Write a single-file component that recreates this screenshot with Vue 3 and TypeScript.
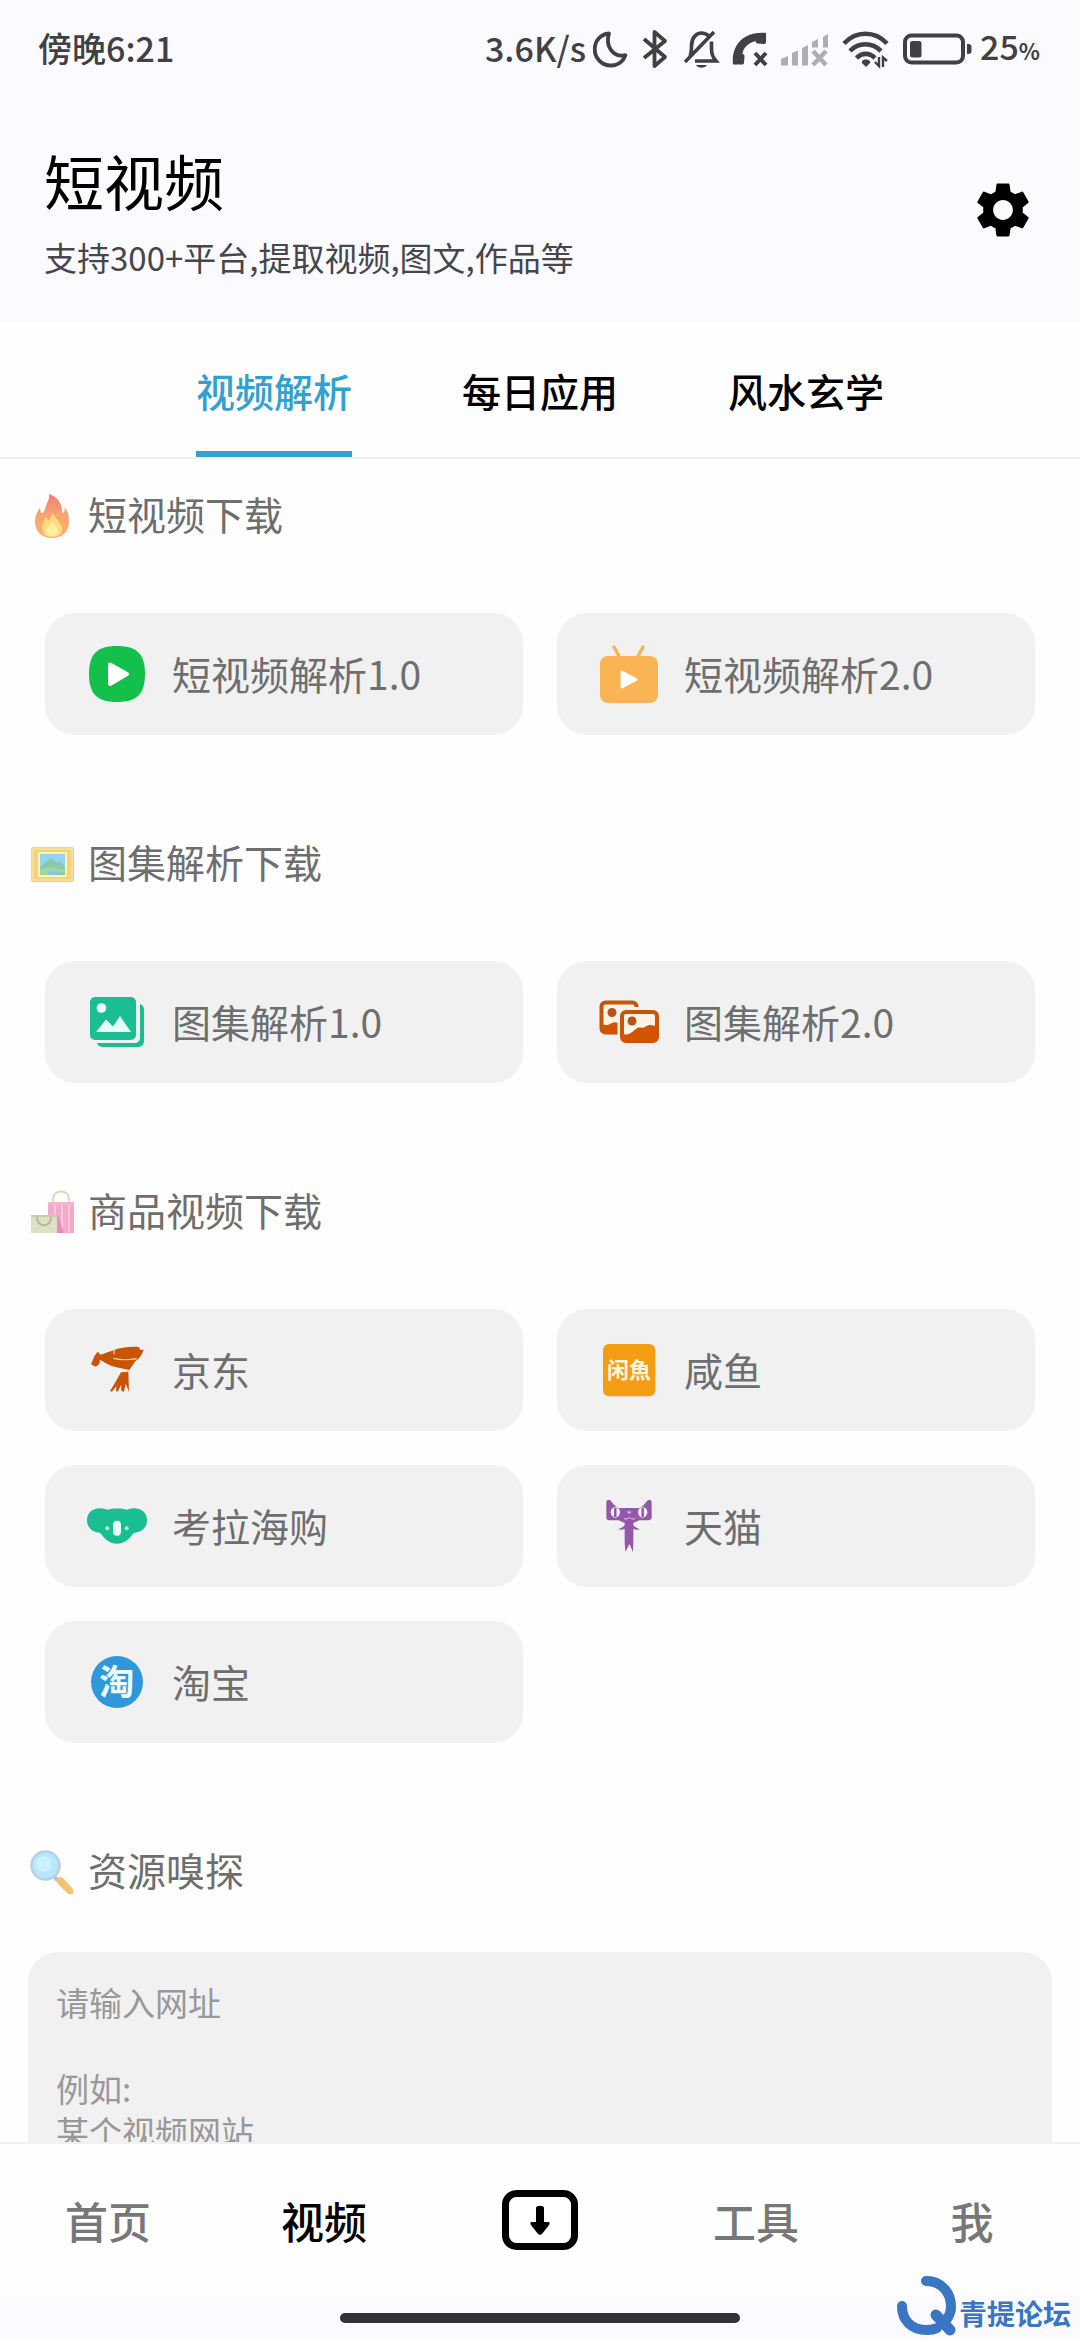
<script setup lang="ts">
import { ref } from 'vue'

interface Entry {
  id: string
  label: string
}
interface Section {
  id: string
  title: string
  items: Entry[]
}

const tabs: string[] = ['视频解析', '每日应用', '风水玄学']
const activeTab = ref<string>('视频解析')

const sections: Section[] = [
  {
    id: 'fire',
    title: '短视频下载',
    items: [
      { id: 'play', label: '短视频解析1.0' },
      { id: 'tv', label: '短视频解析2.0' },
    ],
  },
  {
    id: 'frame',
    title: '图集解析下载',
    items: [
      { id: 'gallery', label: '图集解析1.0' },
      { id: 'photos', label: '图集解析2.0' },
    ],
  },
  {
    id: 'bags',
    title: '商品视频下载',
    items: [
      { id: 'jd', label: '京东' },
      { id: 'xianyu', label: '咸鱼' },
      { id: 'koala', label: '考拉海购' },
      { id: 'tmall', label: '天猫' },
      { id: 'taobao', label: '淘宝' },
    ],
  },
]

const url = ref<string>('')
const hint = '请输入网址\n\n例如:\n某个视频网站'
const activeNav = ref<string>('视频')
const navItems: string[] = ['首页', '视频', '下载', '工具', '我']
</script>

<template>
  <div class="page">
    <div class="status">
      <span class="status-text">傍晚6:21</span>
      <div class="status-icons">
        <div class="status-pair speed">
          <span class="status-text">3.6K/s</span>
          <svg width="38" height="40" viewBox="0 0 38 40"><path d="M17 4.500C9 5 2.800 11.500 2.800 20a16 16 0 0 0 16.500 16.500c6.500 0 12-3.800 14.200-10.300C21 29 13 17 17 4.500z" fill="none" stroke="#414145" stroke-width="3.800" stroke-linejoin="round" /></svg>
        </div>
        <svg width="30" height="40" viewBox="0 0 30 40"><path d="M2 10l21 18-10.500 9V3L23 12 2 29" fill="none" stroke="#414145" stroke-width="3.800" stroke-linejoin="round" /></svg>
        <svg width="36" height="40" viewBox="0 0 36 40" fill="none" stroke="#414145" stroke-width="3.600"><path d="M6 27c1.500-3 1.500-6 1.500-10C7.500 9 12 4 17.500 4c3 0 5.500 1.200 7.500 3.200M27.500 12.500V20c0 5 1 8 4.500 12H11M1 33L30 3" /><path d="M12 36h11c-2 3.500-9 3.500-11 0z" fill="#414145" stroke="none" /></svg>
        <svg width="36" height="40" viewBox="0 0 36 40"><path d="M1 35.500C-1 16 12 2 34 4v9c0 1.500-1 2-2.500 2l-6-.5c-1.200-.2-1.800-1-2-2.500C16 14 11 19 10.500 25c1.500.3 2 1 2 2.500l-.5 6c0 1.500-.8 2-2 2z" fill="#414145" /><path d="M23 24l11 12M34 24L23 36" stroke="#414145" stroke-width="4" /></svg>
        <svg width="50" height="40" viewBox="0 0 50 40" fill="#aeaeb2"><path d="M1 30l7-3v9.500H1zM12 24l6-2.500v15h-6zM22 19l6-3v20.500h-6zM32 13l6-3v8.500h-6zM43 8l5-3v13.500h-5z" /><path d="M33 22l13 14M46 22L33 36" stroke="#aeaeb2" stroke-width="4.500" /></svg>
        <svg width="48" height="40" viewBox="0 0 48 40" fill="none" stroke="#414145" stroke-width="4.600"><path d="M2 14.500C14 1.500 33 1.500 45 14.500M8 22c8.500-9 22-9 31 0M14.500 29c5.500-5.500 13-5.500 18.500 0" /><path d="M24 30.500c-3 0-5 2-4 3.500l4 4 4-4c1-1.500-1-3.500-4-3.500z" fill="#414145" stroke="none" /><path d="M33 33l4 4V28M45 32l-4-3.500V38" stroke-width="2.400" /></svg>
        <div class="status-pair">
          <svg width="70" height="40" viewBox="0 0 70 40"><rect x="3" y="6.500" width="58" height="27" rx="6.500" fill="none" stroke="#414145" stroke-width="4" /><rect x="8" y="12" width="11.500" height="16.500" rx="2.500" fill="#414145" /><path d="M65 15h1.500a3 3 0 0 1 3 3v4a3 3 0 0 1-3 3H65z" fill="#414145" /></svg>
          <span class="status-text">25<small class="percent">%</small></span>
        </div>
      </div>
    </div>

    <header class="header">
      <div class="heading">
        <h1 class="title">短视频</h1>
        <p class="subtitle">支持300+平台,提取视频,图文,作品等</p>
      </div>
      <button class="gear" type="button" aria-label="设置">
        <svg width="66" height="66" viewBox="0 0 24 24"><path d="M19.14 12.94c.04-.3.06-.61.06-.94 0-.32-.02-.64-.07-.94l2.030-1.580c.18-.14.23-.41.12-.61l-1.920-3.320c-.12-.22-.37-.29-.59-.22l-2.390.96c-.5-.38-1.030-.7-1.620-.94l-.36-2.540c-.04-.24-.24-.41-.48-.41h-3.840c-.24 0-.43.17-.47.41l-.36 2.540c-.59.24-1.130.57-1.620.94l-2.390-.96c-.22-.08-.47 0-.59.22L2.740 8.870c-.12.21-.08.47.12.61l2.030 1.580c-.05.3-.09.63-.09.94s.02.64.07.94l-2.030 1.580c-.18.14-.23.41-.12.61l1.920 3.320c.12.22.37.29.59.22l2.390-.96c.5.38 1.030.7 1.620.94l.36 2.540c.05.24.24.41.48.41h3.840c.24 0 .44-.17.47-.41l.36-2.540c.59-.24 1.130-.56 1.620-.94l2.390.96c.22.08.47 0 .59-.22l1.920-3.320c.12-.22.07-.47-.12-.61l-2.010-1.580zM12 15.600c-1.980 0-3.600-1.620-3.600-3.600s1.620-3.600 3.600-3.600 3.600 1.620 3.600 3.600-1.620 3.600-3.600 3.600z" fill="#000" /></svg>
      </button>
    </header>

    <nav class="tabs">
      <button
        v-for="tab in tabs"
        :key="tab"
        type="button"
        class="tab"
        :class="{ active: tab === activeTab }"
        @click="activeTab = tab"
      >{{ tab }}</button>
    </nav>

    <main class="content">
      <section v-for="section in sections" :key="section.id" class="section">
        <h2 class="section-title">
          <svg v-if="section.id === 'fire'" class="emoji" width="44" height="44" viewBox="0 0 44 44">
            <defs>
              <linearGradient id="flame" x1="0" y1="0" x2="0" y2="1"><stop offset="0" stop-color="#ee8078" /><stop offset=".5" stop-color="#f9a56d" /><stop offset="1" stop-color="#fbb36c" /></linearGradient>
            </defs>
            <path d="M19 0c9 3 13 10 13 17 0 2 1 3 2 1 1-1 1-3 0-5 4 4 5 9 5 15 0 9-6 16-17 16S5 37 5 28c0-6 2-10 5-14 0 3 1 5 2 5 2 0 3-3 4-7 1-4 4-7 3-12z" fill="url(#flame)" />
            <path d="M22 16c0 7 10 11 10 19 0 5-4 8-10 8s-10-3-10-9c0-5 3-7 3-11 2 1 3 2 3 4 3-3 5-6 4-11z" fill="#fddd80" />
            <path d="M23 27c0 4 5 6 5 10 0 3-2 5-6 5s-6-2-6-5c0-4 6-5 7-10z" fill="#fff0a0" />
          </svg>
          <svg v-else-if="section.id === 'frame'" class="emoji" width="44" height="44" viewBox="0 0 44 44">
            <rect x="1" y="5" width="43" height="35" rx="2" fill="#f3d47e" />
            <rect x="3" y="7" width="39" height="31" fill="none" stroke="#f8e29d" stroke-width="1.500" />
            <rect x="8" y="10" width="29" height="25" fill="#fff1b8" />
            <rect x="10" y="12" width="25" height="21" fill="#94d4f0" />
            <path d="M10 25l7-6 5-3 5 5 3-2 5 6v8H10z" fill="#85cbb0" />
            <path d="M10 28l9-3 16 3v3l-14-2-3 4h-8z" fill="#a3d59c" />
            <path d="M18 30h9v3h-9z" fill="#86c4e9" />
          </svg>
          <svg v-else class="emoji" width="44" height="44" viewBox="0 0 44 44">
            <path d="M23 13V9c0-10 16-10 16 0v4" fill="none" stroke="#ded9be" stroke-width="2" />
            <rect x="18" y="12" width="26" height="31" fill="#f5a8cb" />
            <path d="M25 14v29M32 14v29M39 14v29" stroke="#fbc6dd" stroke-width="2" />
            <path d="M18 12h26v3H18z" fill="#f3b4cd" />
            <path d="M24 25h4l6 18H24z" fill="#df91b6" />
            <rect x="1" y="25" width="26" height="18" fill="#dce0c4" />
            <path d="M1 25h26v2H1z" fill="#c6cbaa" />
            <path d="M7 27c0 11 14 11 14 0" fill="none" stroke="#b9b89a" stroke-width="2" />
          </svg>
          <span>{{ section.title }}</span>
        </h2>
        <div class="cards">
          <button v-for="item in section.items" :key="item.id" class="card" type="button">
            <svg v-if="item.id === 'play'" width="60" height="60" viewBox="0 0 60 60">
              <path d="M30 2C50 2 58 10 58 30S50 58 30 58 2 50 2 30 10 2 30 2z" fill="#14c04c" />
              <path d="M23 20.500L40 30 23 40z" fill="#fff" stroke="#fff" stroke-width="4" stroke-linejoin="round" />
            </svg>
            <svg v-else-if="item.id === 'tv'" width="60" height="60" viewBox="0 0 60 60">
              <path d="M15 3l6 11M44 3l-6 11" stroke="#f9b257" stroke-width="3.400" stroke-linecap="round" />
              <rect x="1" y="12" width="58" height="47" rx="8" fill="#fbb454" />
              <path d="M23 28l14 7.500L23 43z" fill="#fff" stroke="#fff" stroke-width="3" stroke-linejoin="round" />
            </svg>
            <svg v-else-if="item.id === 'gallery'" width="60" height="60" viewBox="0 0 60 60">
              <rect x="3" y="5" width="46" height="43" rx="5" fill="#1bbd93" />
              <path d="M53 12c3 1 4 3 4 6v30c0 5-2 7-7 7H17c-4 0-6-1-7-4h37c4 0 6-2 6-6z" fill="#1bbd93" />
              <circle cx="14.500" cy="16" r="4.800" fill="#e9fffa" />
              <path d="M9 40l10-12.500 7 7L33 24l11 16z" fill="#e9fffa" />
            </svg>
            <svg v-else-if="item.id === 'photos'" width="60" height="60" viewBox="0 0 60 60">
              <rect x="2.500" y="10.500" width="35" height="30" rx="4" fill="#fff3e6" stroke="#c4560c" stroke-width="4" />
              <circle cx="13" cy="20.500" r="4.500" fill="#b4541a" />
              <path d="M3 32c4 2 7 1 10-1 2-1 4-1 6 0v10H3z" fill="#d15400" />
              <rect x="18.500" y="15" width="43" height="40" fill="#f1f1f1" />
              <rect x="23" y="20" width="35" height="29" rx="4" fill="#fff3e6" stroke="#c4560c" stroke-width="4" />
              <circle cx="33" cy="29" r="4.500" fill="#b4541a" />
              <path d="M23 41c6 4 10-1 14-4 3-3 6 0 9-2 4-3 8-2 12 0v14H23z" fill="#d15400" />
            </svg>
            <svg v-else-if="item.id === 'jd'" width="60" height="60" viewBox="261 540 180 180">
              <path d="M273 613l10-24 10-14 9 9 38-13c20-7 45-12 76-10l6 9 9-1c-3 10-10 25-25 35l-18 26-38-8c-20-5-38-15-50-23 0 12-5 18-14 21z" fill="#c95405" />
              <path d="M340 595c25 6 48 5 70 1M342 570v13" fill="none" stroke="#fbdcb9" stroke-width="3.500" />
              <path d="M363 637l22-2 2 60-10-24-5 24-8-2-1-18-10 20-5-2 1-14-13 16-6-2 16-26z" fill="#c95405" />
            </svg>
            <svg v-else-if="item.id === 'xianyu'" width="60" height="60" viewBox="177 180 180 180">
              <rect x="189" y="192" width="157" height="157" rx="18" fill="#f49c12" />
              <text class="logo-text" x="267" y="295" font-size="66" text-anchor="middle" fill="#fff8de">闲魚</text>
            </svg>
            <svg v-else-if="item.id === 'koala'" width="60" height="60" viewBox="261 168 180 180">
              <path d="M261 240c0-34 38-42 60-31 18-5 42-5 60 0 22-11 60-3 60 31 0 24-16 36-40 39-14 20-28 32-50 32s-36-12-50-32c-24-3-40-15-40-39z" fill="#1bbd93" />
              <rect x="339" y="242" width="24" height="45" rx="12" fill="#eafff8" />
              <circle cx="322" cy="265" r="6" fill="#b5f2df" /><circle cx="380" cy="265" r="6" fill="#b5f2df" />
            </svg>
            <svg v-else-if="item.id === 'tmall'" width="60" height="60" viewBox="177 648 180 180">
              <path d="M199 668c0-9 7-11 13-6 8 8 14 21 27 22h56c13-1 19-14 27-22 6-5 13-3 13 6v44c0 7-4 9-10 9h-27l-18 8v7c5 5 11 9 20 12-8 2-14 2-20-2v40l-1 30-11-24-12 24-2-30v-40c-6 4-12 4-20 2 9-3 15-7 20-12v-7l-18-8h-27c-7 0-10-2-10-9z" fill="#9458a9" />
              <ellipse cx="226" cy="697" rx="14" ry="16" fill="#fdeaff" /><ellipse cx="308" cy="697" rx="14" ry="16" fill="#fdeaff" />
              <path d="M226 683v28M308 683v28" stroke="#8753a0" stroke-width="7" />
              <path d="M262 696h11l-5 4zM252 716c8 2 13 0 16-4 4 4 9 6 17 4" fill="none" stroke="#f2c9f4" stroke-width="3" />
            </svg>
            <svg v-else width="60" height="60" viewBox="261 636 180 180">
              <circle cx="351" cy="726" r="78" fill="#2e98db" />
              <text class="logo-text" x="350" y="765" font-size="106" text-anchor="middle" fill="#ecfcff">淘</text>
            </svg>
            <span class="card-label">{{ item.label }}</span>
          </button>
        </div>
      </section>

      <section class="section">
        <label class="section-title" for="site-url">
          <svg class="emoji" width="44" height="44" viewBox="0 0 44 44">
            <path d="M24 26l4 5" stroke="#b9c3cb" stroke-width="4" />
            <path d="M27 31c0-4 3-5 6-3l9 10c4 5-1 8-5 5l-9-9z" fill="#f3c272" />
            <circle cx="15.500" cy="15.500" r="14" fill="#b7e7fb" stroke="#b9cfe3" stroke-width="2.500" />
            <circle cx="14" cy="14" r="8" fill="#c8f0fd" />
          </svg>
          <span>资源嗅探</span>
        </label>
        <textarea id="site-url" v-model="url" class="url-box" :placeholder="hint"></textarea>
      </section>
    </main>

    <footer class="footer">
      <nav class="bottom-nav">
        <button
          v-for="name in navItems"
          :key="name"
          type="button"
          class="nav-item"
          :class="{ current: name === activeNav }"
          :aria-label="name"
          @click="activeNav = name"
        >
          <svg v-if="name === '下载'" width="76" height="60" viewBox="0 0 76 60"><rect x="3.500" y="3.500" width="69" height="53" rx="11" fill="#fff" stroke="#000" stroke-width="7" /><path d="M34 18c0-3 8-3 8 0v14h4c2 0 2 1 1 3l-7 9c-1 1-3 1-4 0l-7-9c-1-2-1-3 1-3h4z" fill="#000" /></svg>
          <template v-else>{{ name }}</template>
        </button>
      </nav>
      <div class="gesture"><span class="gesture-bar"></span></div>
      <div class="watermark">
        <svg width="60" height="62" viewBox="0 0 60 62" fill="none" stroke="#3a76c4" stroke-linecap="round"><path d="M29 7c16 0 25 12 25 26 0 5-2 9-4 12M40 54c-4 2-7 2-10 2C14 56 5 46 5 32" stroke-width="10" /><path d="M39 41l14 15" stroke-width="11" /></svg>
        <span>青提论坛</span>
      </div>
    </footer>
  </div>
</template>

<style>
body {
  margin: 0;
  background: #fefefe;
}
</style>

<style scoped>
.page {
  display: flex;
  flex-direction: column;
  height: 100vh;
  font-family: "Noto Sans CJK SC", "Noto Sans", sans-serif;
  background: #fefefe;
}
svg {
  display: block;
  flex: none;
}
button {
  margin: 0;
  padding: 0;
  border: 0;
  background: none;
  font-family: inherit;
  cursor: pointer;
}
.status {
  flex: none;
  display: flex;
  align-items: center;
  justify-content: space-between;
  height: 98px;
  padding: 0 40px 0 38px;
  background: #fbfbff;
}
.status-text {
  padding-bottom: 2px;
  font-size: 34px;
  line-height: 40px;
  font-weight: 500;
  color: #414145;
  white-space: nowrap;
}
.status-icons {
  display: flex;
  align-items: center;
  gap: 12px;
}
.status-pair {
  display: flex;
  align-items: center;
  gap: 8px;
}
.status-pair.speed {
  gap: 6px;
}
.percent {
  font-size: 22px;
  font-weight: 700;
}
.header {
  flex: none;
  display: flex;
  align-items: center;
  justify-content: space-between;
  height: 224px;
  padding: 0 44px;
  background: #fbfbff;
}
.heading {
  display: flex;
  flex-direction: column;
  gap: 16px;
  padding-top: 2px;
}
.title {
  margin: 0;
  font-size: 60px;
  line-height: 76px;
  font-weight: 400;
  color: #000;
}
.subtitle {
  margin: 0;
  font-size: 33px;
  line-height: 46px;
  color: #46464c;
}
.tabs {
  flex: none;
  display: flex;
  justify-content: center;
  gap: 110px;
  border-bottom: 2px solid #efefef;
}
.tab {
  padding: 39px 0 32px;
  border-bottom: 6px solid transparent;
  font-size: 39px;
  line-height: 58px;
  font-weight: 500;
  color: #000;
}
.tab.active {
  color: #32a1cf;
  border-bottom-color: #32a1cf;
}
.content {
  flex: 1;
  min-height: 0;
  display: flex;
  flex-direction: column;
  gap: 98px;
  padding-top: 26px;
  overflow-y: auto;
  scrollbar-width: none;
}
.section {
  flex: none;
}
.section-title {
  display: flex;
  align-items: center;
  gap: 14px;
  margin: 0;
  padding: 0 30px;
  font-size: 39px;
  line-height: 56px;
  font-weight: 400;
  color: #6e6e6e;
}
.emoji {
  margin-top: 6px;
}
.cards {
  display: grid;
  grid-template-columns: 1fr 1fr;
  gap: 34px;
  padding: 72px 45px 0;
}
.card {
  display: flex;
  align-items: center;
  gap: 25px;
  height: 122px;
  padding: 0 42px;
  border-radius: 30px;
  background: #f1f1f1;
  font-size: 39px;
  line-height: 56px;
  color: #6e6e6e;
}
.card-label {
  padding-bottom: 3px;
}
.logo-text {
  font-weight: 700;
}
.url-box {
  display: block;
  box-sizing: border-box;
  width: calc(100% - 56px);
  height: 320px;
  margin: 55px 28px 0;
  padding: 29px 28px;
  border: 0;
  border-radius: 30px;
  resize: none;
  background: #f1f1f1;
  font-family: inherit;
  font-size: 33px;
  line-height: 43px;
  color: #333;
}
.url-box::placeholder {
  color: #989898;
  opacity: 1;
}
.footer {
  flex: none;
  position: relative;
  border-top: 2px solid #f1f1f1;
  background: #fefefe;
}
.bottom-nav {
  display: grid;
  grid-template-columns: repeat(5, 1fr);
  height: 152px;
}
.nav-item {
  display: flex;
  align-items: center;
  justify-content: center;
  font-size: 43px;
  line-height: 60px;
  font-weight: 500;
  color: #777;
}
.nav-item.current {
  color: #000;
}
.gesture {
  display: flex;
  align-items: center;
  justify-content: center;
  height: 44px;
  background: #fbfbff;
}
.gesture-bar {
  width: 37%;
  height: 10px;
  border-radius: 5px;
  background: #333337;
}
.watermark {
  position: absolute;
  right: 9px;
  bottom: 4px;
  display: flex;
  align-items: flex-end;
  gap: 2px;
  font-size: 28px;
  line-height: 46px;
  font-weight: 700;
  color: #3a76c4;
}
</style>
